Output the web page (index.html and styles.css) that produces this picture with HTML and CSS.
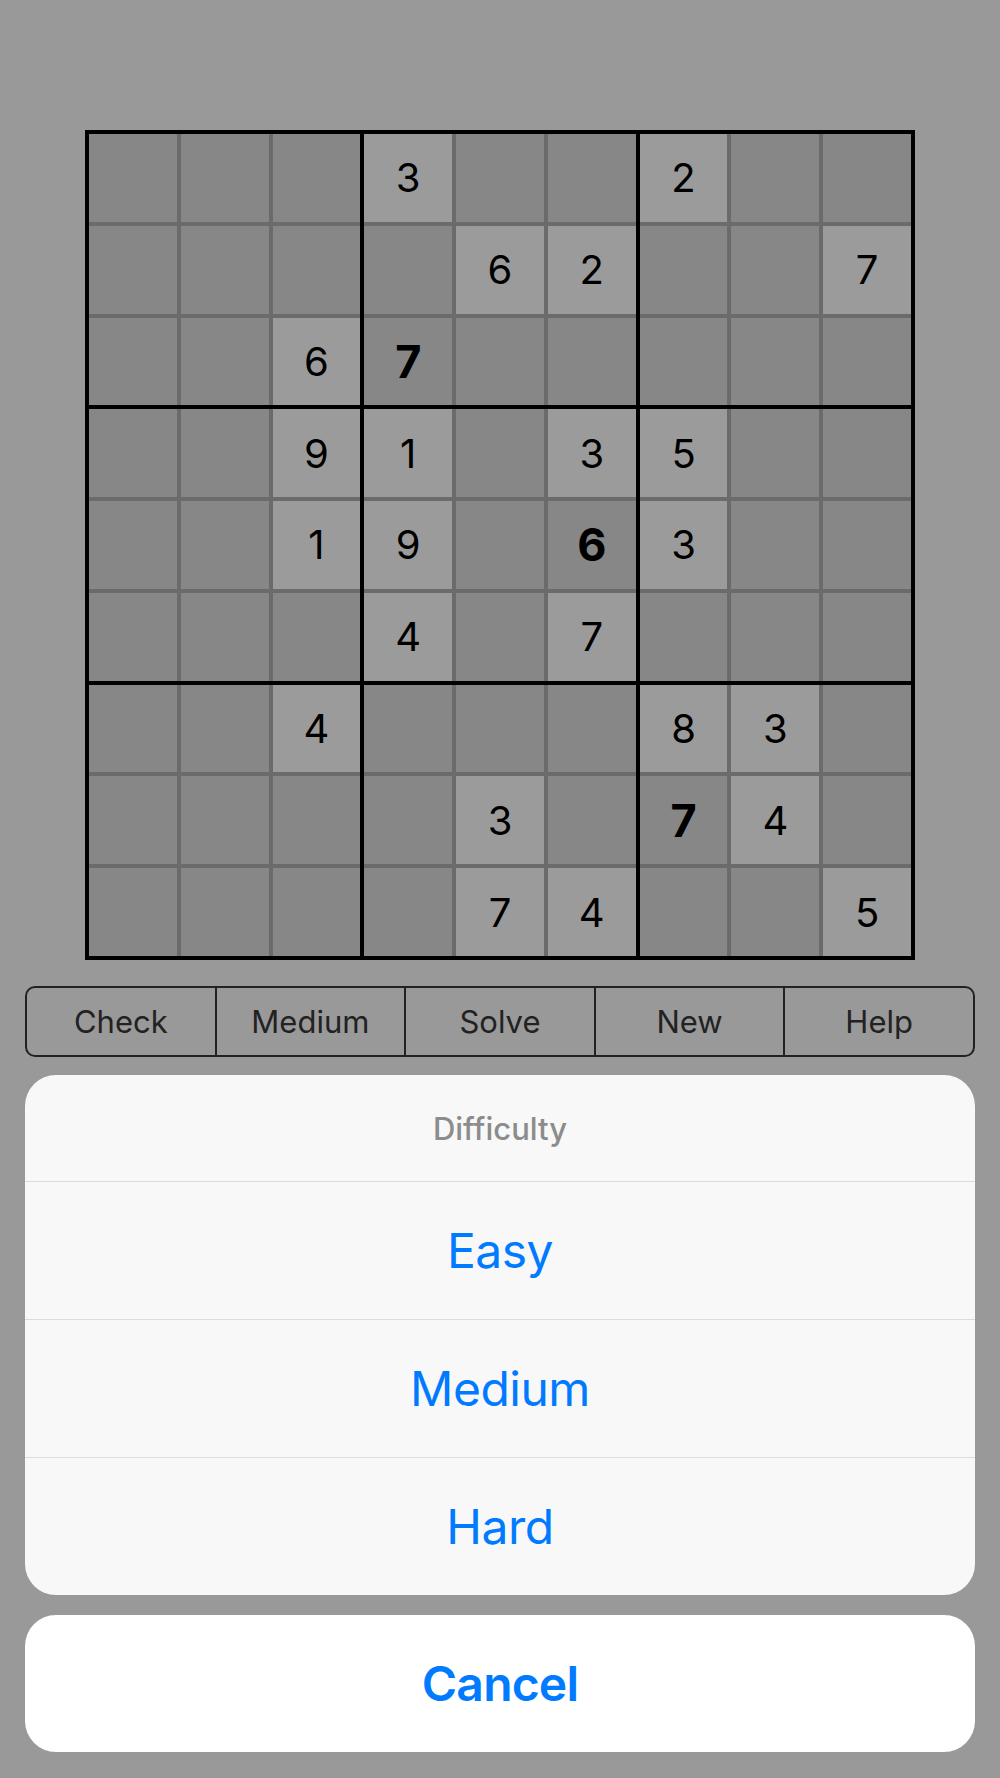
FILE: index.html
```html
<!DOCTYPE html>
<html>
    <head>
        <title>Sudoku</title>
        <meta charset="UTF-8">
        <link rel="stylesheet" href="styles.css">
    </head>
    <body>
        <div id="game">
            <div class="board">
                <div class="box">
                    <div class="cell"></div><div class="cell"></div><div class="cell"></div>
                    <div class="cell"></div><div class="cell"></div><div class="cell"></div>
                    <div class="cell"></div><div class="cell"></div><div class="cell given">6</div>
                </div>
                <div class="box">
                    <div class="cell given">3</div><div class="cell"></div><div class="cell"></div>
                    <div class="cell"></div><div class="cell given">6</div><div class="cell given">2</div>
                    <div class="cell user">7</div><div class="cell"></div><div class="cell"></div>
                </div>
                <div class="box">
                    <div class="cell given">2</div><div class="cell"></div><div class="cell"></div>
                    <div class="cell"></div><div class="cell"></div><div class="cell given">7</div>
                    <div class="cell"></div><div class="cell"></div><div class="cell"></div>
                </div>
                <div class="box">
                    <div class="cell"></div><div class="cell"></div><div class="cell given">9</div>
                    <div class="cell"></div><div class="cell"></div><div class="cell given">1</div>
                    <div class="cell"></div><div class="cell"></div><div class="cell"></div>
                </div>
                <div class="box">
                    <div class="cell given">1</div><div class="cell"></div><div class="cell given">3</div>
                    <div class="cell given">9</div><div class="cell"></div><div class="cell user">6</div>
                    <div class="cell given">4</div><div class="cell"></div><div class="cell given">7</div>
                </div>
                <div class="box">
                    <div class="cell given">5</div><div class="cell"></div><div class="cell"></div>
                    <div class="cell given">3</div><div class="cell"></div><div class="cell"></div>
                    <div class="cell"></div><div class="cell"></div><div class="cell"></div>
                </div>
                <div class="box">
                    <div class="cell"></div><div class="cell"></div><div class="cell given">4</div>
                    <div class="cell"></div><div class="cell"></div><div class="cell"></div>
                    <div class="cell"></div><div class="cell"></div><div class="cell"></div>
                </div>
                <div class="box">
                    <div class="cell"></div><div class="cell"></div><div class="cell"></div>
                    <div class="cell"></div><div class="cell given">3</div><div class="cell"></div>
                    <div class="cell"></div><div class="cell given">7</div><div class="cell given">4</div>
                </div>
                <div class="box">
                    <div class="cell given">8</div><div class="cell given">3</div><div class="cell"></div>
                    <div class="cell user">7</div><div class="cell given">4</div><div class="cell"></div>
                    <div class="cell"></div><div class="cell"></div><div class="cell given">5</div>
                </div>
            </div>

            <div class="segments">
                <span>Check</span>
                <span>Medium</span>
                <span>Solve</span>
                <span>New</span>
                <span>Help</span>
            </div>
        </div>

        <!-- 难度选择 -->
        <div class="sheet">
            <div class="sheet-title">Difficulty</div>
            <div class="sheet-item">Easy</div>
            <div class="sheet-item">Medium</div>
            <div class="sheet-item">Hard</div>
        </div>
        <div class="cancel">Cancel</div>
    </body>
</html>
```

FILE: styles.css
```css
* {
    margin: 0;
    padding: 0;
    box-sizing: border-box;
}

body {
    height: 1778px;
    overflow: hidden;
    background-color: #999;
    font-family: Inter, "Liberation Sans", sans-serif;
}

#game {
    padding-top: 130px;
}

.board {
    width: 830px;
    height: 830px;
    margin: 0 auto;
    border: 4px solid #000;
    background-color: #000;
    display: grid;
    grid-template-columns: repeat(3, 1fr);
    grid-template-rows: repeat(3, 1fr);
    gap: 4px;
}

.board .box {
    display: grid;
    grid-template-columns: repeat(3, 1fr);
    grid-template-rows: repeat(3, 1fr);
    gap: 4px;
    background-color: #6b6b6b;
}

.board .cell {
    display: flex;
    align-items: center;
    justify-content: center;
    background-color: #878787;
    color: #000;
    font-size: 40px;
}

.board .given {
    background-color: #9b9b9b;
}

.board .user {
    font-size: 45px;
    font-weight: 700;
}

.segments {
    display: flex;
    height: 71px;
    margin: 26px 25px 0;
    border: 2px solid #222;
    border-radius: 10px;
}

.segments span {
    flex: 1;
    display: flex;
    align-items: center;
    justify-content: center;
    border-left: 2px solid #222;
    color: #222;
    font-size: 31px;
}

.segments span:first-child {
    border-left: none;
}

.sheet {
    margin: 18px 25px 0;
    border-radius: 31px;
    background-color: #f8f8f8;
    overflow: hidden;
}

.sheet-title {
    height: 106px;
    display: flex;
    align-items: center;
    justify-content: center;
    color: #8c8c8c;
    font-size: 31px;
    font-weight: 500;
}

.sheet-item {
    height: 138px;
    display: flex;
    align-items: center;
    justify-content: center;
    border-top: 1px solid #dcdcdc;
    color: #007aff;
    font-size: 48px;
    letter-spacing: -0.5px;
}

.cancel {
    height: 137px;
    margin: 20px 25px 0;
    border-radius: 31px;
    background-color: #fff;
    display: flex;
    align-items: center;
    justify-content: center;
    color: #007aff;
    font-size: 48px;
    font-weight: 600;
    letter-spacing: -0.8px;
}
```
